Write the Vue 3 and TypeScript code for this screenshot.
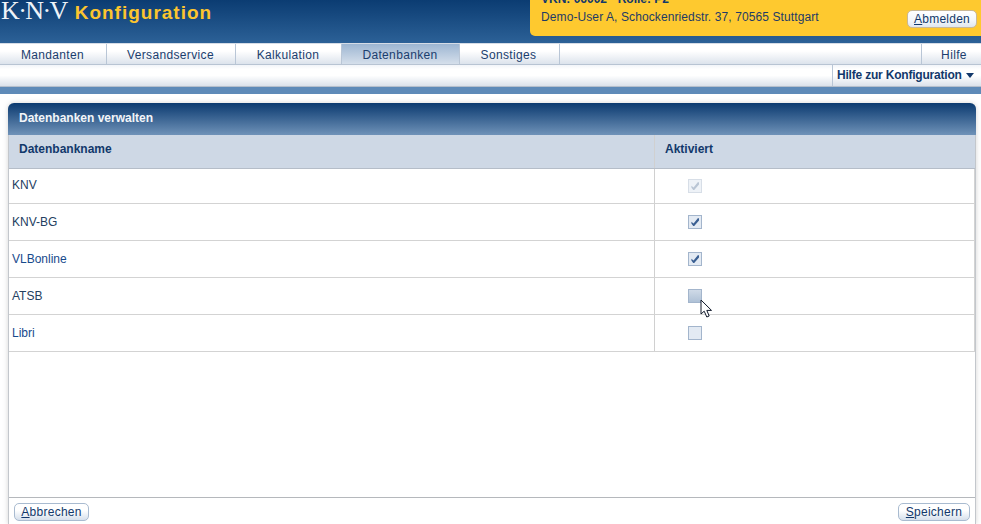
<script setup lang="ts">
interface Row { name: string; state: 'locked' | 'on' | 'off' | 'hover'; link?: boolean }
const tabs: string[] = ['Mandanten', 'Versandservice', 'Kalkulation', 'Datenbanken', 'Sonstiges']
const rows: Row[] = [
  { name: 'KNV', state: 'locked' },
  { name: 'KNV-BG', state: 'on' },
  { name: 'VLBonline', state: 'on', link: true },
  { name: 'ATSB', state: 'hover' },
  { name: 'Libri', state: 'off', link: true },
]
</script>

<template>
  <div class="page">
    <header class="top">
      <div class="brand">
        <span class="logo">K·N·V</span>
        <span class="title">Konfiguration</span>
      </div>
      <div class="user">
        <div class="role">VKN: 06002 - Rolle: P2</div>
        <div class="userline">
          <span class="addr">Demo-User A, Schockenriedstr. 37, 70565 Stuttgart</span>
          <button class="btn logout"><u>A</u>bmelden</button>
        </div>
      </div>
    </header>
    <nav class="tabs">
      <a v-for="t in tabs" :key="t" class="tab" :class="{ active: t === 'Datenbanken' }">{{ t }}</a>
      <span class="spacer"></span>
      <a class="tab help">Hilfe</a>
    </nav>
    <div class="subbar">
      <span class="subhelp">Hilfe zur Konfiguration <i class="caret"></i></span>
    </div>
    <div class="band"></div>
    <main class="panel">
      <h2 class="panel-title">Datenbanken verwalten</h2>
      <div class="thead">
        <div class="c1">Datenbankname</div>
        <div class="c2">Aktiviert</div>
      </div>
      <div v-for="r in rows" :key="r.name" class="row" :class="{ first: r.state === 'locked' }">
        <div class="c1 name" :class="{ link: r.link }">{{ r.name }}</div>
        <div class="c2 cell">
          <span class="check" :class="r.state">
            <svg v-if="r.state === 'on' || r.state === 'locked'" viewBox="0 0 14 14" width="14" height="14">
              <path d="M3.4 6.8 L5.6 8.4 L10 3 L11 3.4 L11 5.4 L6.2 11 L5.2 11 L3.4 8.6 Z" />
            </svg>
          </span>
        </div>
      </div>
      <div class="fill"></div>
      <footer class="foot">
        <button class="btn"><u>A</u>bbrechen</button>
        <button class="btn"><u>S</u>peichern</button>
      </footer>
      <svg class="cursor" viewBox="0 0 13 20" width="13" height="20">
        <path d="M1 1 L1 15 L4.2 12.2 L6.8 18 L9.2 17 L6.8 11.4 L11.5 11.4 Z" fill="#fff" stroke="#10182a" stroke-width="1" />
      </svg>
    </main>
  </div>
</template>

<style>
html, body { margin: 0; background: #fff; overflow: hidden; }
</style>

<style scoped>
.page { width: 981px; height: 524px; overflow: hidden; display: flex; flex-direction: column; font-family: "Liberation Sans", Arial, sans-serif; font-size: 12px; color: #12386b; }
.top { height: 43px; flex: none; display: flex; justify-content: space-between; align-items: flex-start; background: linear-gradient(#0b3c72, #2c6197); }
.brand { display: flex; align-items: baseline; height: 36px; }
.logo { font-family: "Liberation Serif", serif; font-size: 26px; line-height: 21px; color: #eef3f8; margin-left: 1px; letter-spacing: -1.6px; }
.title { font-family: "Liberation Sans", sans-serif; font-weight: bold; font-size: 19px; line-height: 19px; color: #fcc52e; margin-left: 8px; letter-spacing: 1px; }
.user { width: 451px; height: 36px; box-sizing: border-box; background: #fec92f; border-radius: 0 0 0 5px; padding: 0 4px 7px 11px; display: flex; flex-direction: column; justify-content: flex-end; overflow: hidden; }
.role { font-weight: bold; line-height: 14px; color: #12386b; flex: none; margin-bottom: 3px; }
.userline { display: flex; justify-content: space-between; align-items: flex-start; height: 20px; flex: none; line-height: 16px; color: #1f3b66; }
.addr { letter-spacing: 0.1px; }
.btn { height: 18px; padding: 0 6px; font: 12px "Liberation Sans", Arial, sans-serif; letter-spacing: 0.25px; color: #12386b; background: linear-gradient(#fff, #fff 40%, #d6e0ec); border: 1px solid #a9bbd0; border-radius: 5px; }
.logout { margin-top: 1px; width: 70px; background: linear-gradient(#fff, #f3f6fa 60%, #dfe6ef); border-color: #c9b896; }
.tabs { height: 22px; flex: none; box-sizing: border-box; display: flex; background: linear-gradient(#fff, #fff 35%, #dce3ec); border-top: 1px solid #d5dce6; border-bottom: 1px solid #b8c4d3; }
.tab { box-sizing: border-box; display: flex; align-items: center; justify-content: center; padding: 2px 1px 0 0; border-right: 1px solid #b9c6d6; font-size: 12px; letter-spacing: 0.35px; color: #1b3e6e; height: 20px; }
.tab:nth-child(1) { width: 107px; }
.tab:nth-child(2) { width: 129px; }
.tab:nth-child(3) { width: 106px; }
.tab:nth-child(4) { width: 118px; }
.tab:nth-child(5) { width: 100px; padding-right: 2px; }
.tab.active { background: linear-gradient(#9db6d2, #d5dfeb); border-right-color: #b9c6d6; }
.spacer { flex: 1; }
.tab.help { width: 60px; border-right: 0; border-left: 1px solid #b9c6d6; padding-left: 5px; padding-right: 0; }
.subbar { height: 22px; flex: none; box-sizing: border-box; display: flex; justify-content: flex-end; background: linear-gradient(#f2f5f9, #fff 20%, #fff 50%, #dbe1ea); border-bottom: 1px solid #b5bfcc; }
.subhelp { width: 149px; box-sizing: border-box; border-left: 1px solid #b9c6d6; padding-left: 4px; font-weight: bold; font-size: 12px; letter-spacing: -0.2px; line-height: 21px; color: #12386b; white-space: nowrap; }
.caret { display: inline-block; width: 0; height: 0; border: 4.5px solid transparent; border-top: 5px solid #12386b; border-bottom: 0; margin-left: 1px; vertical-align: 1px; }
.band { height: 7px; flex: none; background: #5e8ab8; }
.panel { position: relative; flex: 1; margin: 9px 5px 0 8px; box-sizing: border-box; display: flex; flex-direction: column; border: solid #c3c7cc; border-width: 0 1px; border-radius: 6px 6px 0 0; box-shadow: 0 0 5px rgba(130,130,130,.35); }
.panel-title { margin: 0 -1px; height: 32px; flex: none; box-sizing: border-box; padding-left: 11px; background: linear-gradient(#0b3a70, #6f92b8); border-radius: 6px 6px 0 0; font-size: 12px; font-weight: bold; line-height: 30px; color: #f2f5f9; }
.thead { height: 34px; flex: none; display: flex; background: #ced8e5; border-bottom: 1px solid #b5bdc8; box-sizing: border-box; font-weight: bold; color: #12386b; }
.thead .c1, .thead .c2 { padding: 0 0 0 10px; line-height: 28px; }
.c1 { width: 645px; flex: none; box-sizing: border-box; }
.c2 { flex: 1; box-sizing: border-box; border-left: 1px solid #d0d0d0; }
.row { height: 37px; flex: none; box-sizing: border-box; display: flex; border-bottom: 1px solid #d3d3d3; border-right: 1px solid #d3d3d3; }
.row.first { height: 35px; }
.name { padding-left: 3px; line-height: 36px; color: #24405f; }
.row.first .name { line-height: 33px; }
.name.link { color: #174a8c; }
.cell { display: flex; padding-left: 33px; align-items: center; }
.check { width: 14px; height: 14px; box-sizing: border-box; display: block; border: 1px solid #a3b5cc; background: #e3eaf3; position: relative; }
.check svg { position: absolute; left: -1px; top: -1px; fill: #3a5f92; }
.check.locked { background: #eef2f7; border-color: #d7dee7; margin-top: -1px; }
.check.locked svg { fill: #b9c5d4; }
.check.hover { background: linear-gradient(#cfdae7, #afc1d6); border-color: #a3b5cc; }
.fill { flex: 1; }
.foot { height: 27px; flex: none; box-sizing: border-box; border-top: 1px solid #b5b8bc; display: flex; justify-content: space-between; padding: 5px 5px 0 5px; }
.foot .btn { width: 75px; }
.foot .btn:last-child { width: 72px; }
.cursor { position: absolute; left: 691px; top: 196px; }
</style>
